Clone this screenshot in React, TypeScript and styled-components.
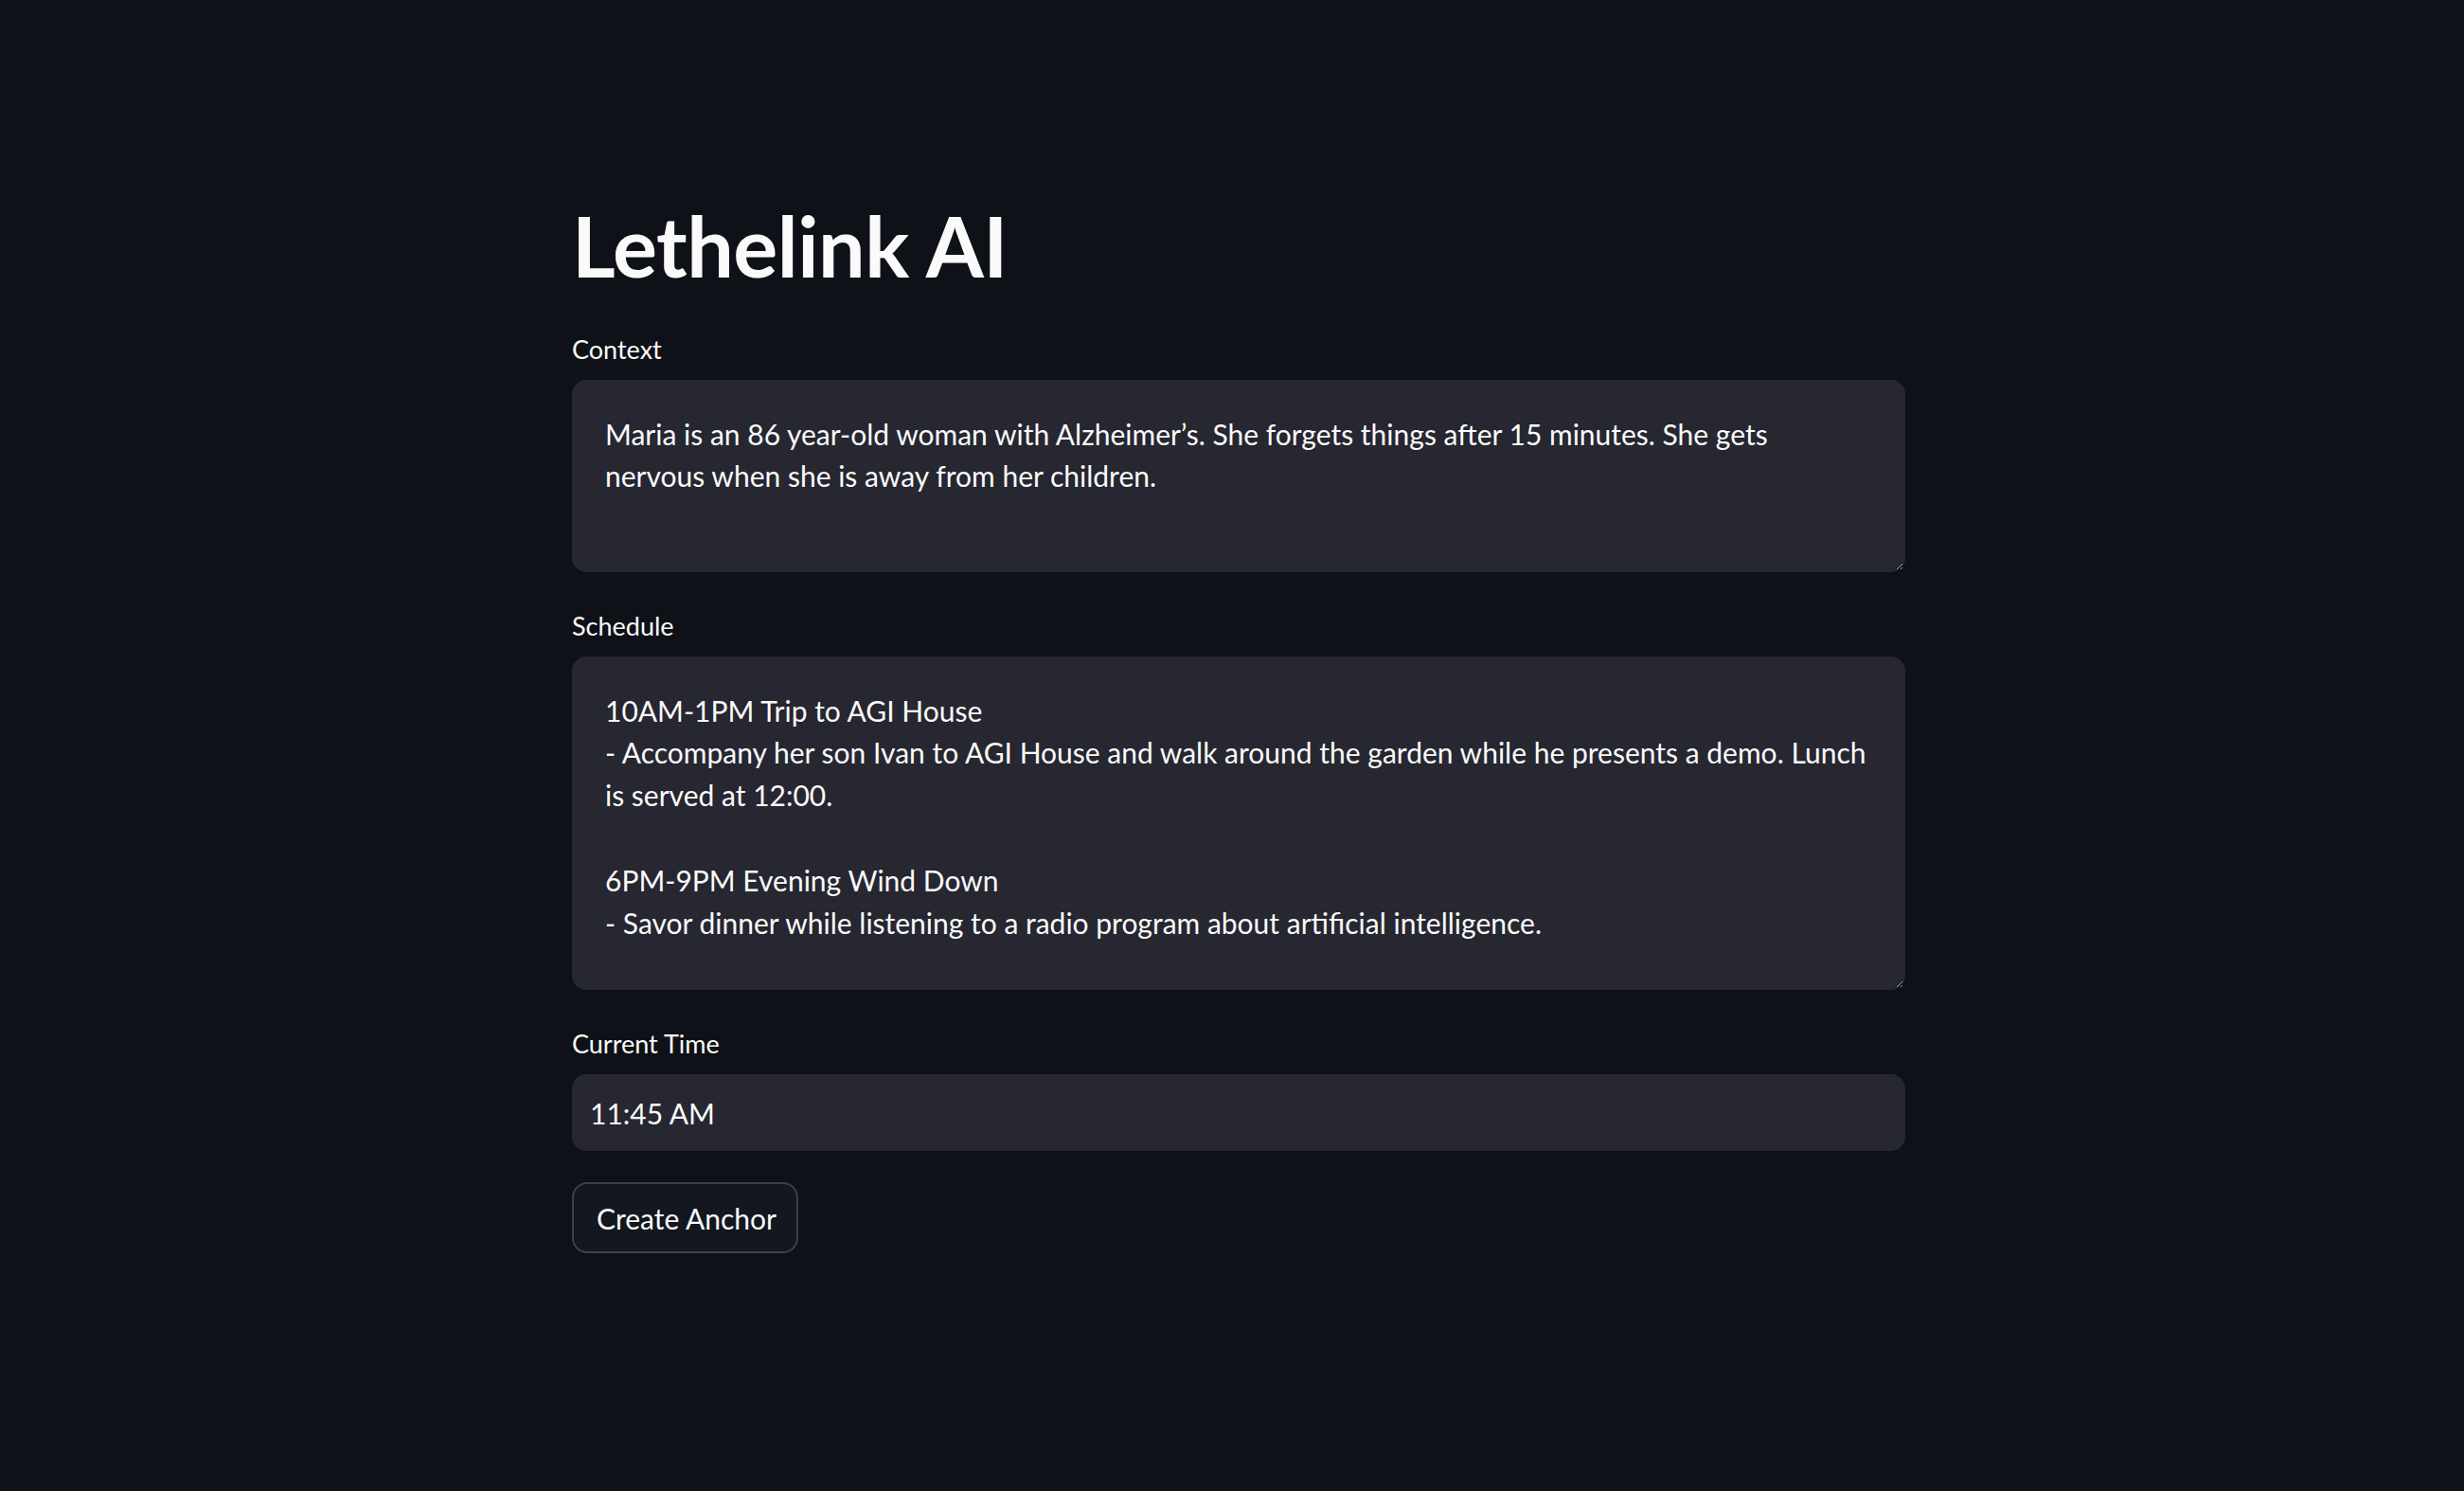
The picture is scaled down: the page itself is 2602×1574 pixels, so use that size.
import React from "react";
import styled, { createGlobalStyle } from "styled-components";

const Global = createGlobalStyle`
  html, body {
    margin: 0;
    padding: 0;
    background: #0e1117;
    color: #fafafa;
    color-scheme: dark;
    font-family: Lato, "Noto Sans", "Liberation Sans", sans-serif;
  }
  #root { min-height: 1574px; }
`;

const Page = styled.main`
  width: 1408px;
  margin-left: calc(50% - 697px);
  padding-top: 207px;
  display: flex;
  flex-direction: column;
`;

const Title = styled.h1`
  margin: 0 0 38px 0;
  font-family: Lato, "Noto Sans", sans-serif;
  font-weight: 700;
  font-size: 88px;
  line-height: 1.2;
  color: #fafafa;
  letter-spacing: -0.5px;
`;

const Fields = styled.div`
  display: flex;
  flex-direction: column;
  gap: 39px;
`;

const Field = styled.div`
  display: flex;
  flex-direction: column;
  gap: 14px;
`;

const Label = styled.label`
  font-size: 27px;
  line-height: 36px;
  color: #fafafa;
`;

const TextArea = styled.textarea<{ $h: number }>`
  box-sizing: border-box;
  width: 100%;
  height: ${(p) => p.$h}px;
  margin: 0;
  padding: 33px 33px 29px;
  background: #262730;
  color: #fafafa;
  border: 2px solid #262730;
  border-radius: 15px;
  font-family: Lato, "Noto Sans", sans-serif;
  font-size: 30px;
  line-height: 44.8px;
  resize: vertical;
  outline: none;
  overflow: hidden;
  white-space: pre-wrap;
`;

const TextInput = styled.input`
  box-sizing: border-box;
  width: 100%;
  height: 81px;
  margin: 0;
  padding: 2px 17px 0;
  background: #262730;
  color: #fafafa;
  border: 2px solid #262730;
  border-radius: 15px;
  font-family: Lato, "Noto Sans", sans-serif;
  font-size: 30px;
  outline: none;
`;

const Button = styled.button`
  align-self: flex-start;
  box-sizing: border-box;
  margin-top: 33px;
  width: 239px;
  height: 75px;
  padding: 2px 24px 0;
  background: #13171f;
  color: #fafafa;
  border: 2px solid #3d4047;
  border-radius: 16px;
  font-family: Lato, "Noto Sans", sans-serif;
  font-size: 30px;
  white-space: nowrap;
  cursor: pointer;
  text-align: left;
`;

const contextText =
  "Maria is an 86 year-old woman with Alzheimer\u2019s. She forgets things after 15 minutes. She gets\nnervous when she is away from her children.";

const scheduleText =
  "10AM-1PM Trip to AGI House\n- Accompany her son Ivan to AGI House and walk around the garden while he presents a demo. Lunch\nis served at 12:00.\n\n6PM-9PM Evening Wind Down\n- Savor dinner while listening to a radio program about artificial intelligence.";

export default function App() {
  return (
    <>
      <Global />
      <Page>
        <Title>Lethelink AI</Title>
        <Fields>
          <Field>
            <Label>Context</Label>
            <TextArea $h={203} readOnly defaultValue={contextText} />
          </Field>
          <Field>
            <Label>Schedule</Label>
            <TextArea $h={352} readOnly defaultValue={scheduleText} />
          </Field>
          <Field>
            <Label>Current Time</Label>
            <TextInput readOnly defaultValue="11:45 AM" />
          </Field>
        </Fields>
        <Button>Create Anchor</Button>
      </Page>
    </>
  );
}
